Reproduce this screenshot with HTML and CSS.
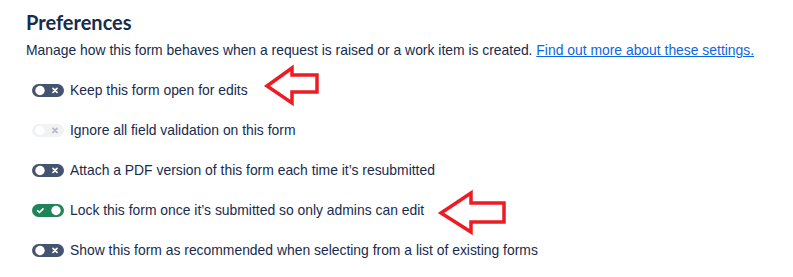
FILE: index.html
```html
<!DOCTYPE html>
<html>
<head>
<meta charset="utf-8">
<link rel="stylesheet" href="styles.css">
</head>
<body>
<div class="page">
  <h2 class="title">Preferences</h2>
  <p class="desc">Manage how this form behaves when a request is raised or a work item is created. <a href="#" class="link">Find out more about these settings.</a></p>
  <div class="list">
    <div class="row">
      <span class="toggle off"><svg viewBox="0 0 32 13" width="32" height="13"><circle cx="8" cy="6.5" r="4.7" fill="#fff"/><path d="M21 4.4 L25 8.4 M25 4.4 L21 8.4" stroke="#fff" stroke-width="1.7" stroke-linecap="round"/></svg></span>
      <span class="label">Keep this form open for edits</span>
    </div>
    <div class="row">
      <span class="toggle disabled"><svg viewBox="0 0 32 13" width="32" height="13"><circle cx="8" cy="6.5" r="4.7" fill="#fff"/><path d="M21 4.4 L25 8.4 M25 4.4 L21 8.4" stroke="#B3B9C4" stroke-width="1.7" stroke-linecap="round"/></svg></span>
      <span class="label">Ignore all field validation on this form</span>
    </div>
    <div class="row">
      <span class="toggle off"><svg viewBox="0 0 32 13" width="32" height="13"><circle cx="8" cy="6.5" r="4.7" fill="#fff"/><path d="M21 4.4 L25 8.4 M25 4.4 L21 8.4" stroke="#fff" stroke-width="1.7" stroke-linecap="round"/></svg></span>
      <span class="label">Attach a PDF version of this form each time it’s resubmitted</span>
    </div>
    <div class="row">
      <span class="toggle on"><svg viewBox="0 0 32 13" width="32" height="13"><path d="M5.6 6.7 L7.5 8.5 L11 4.9" fill="none" stroke="#fff" stroke-width="1.7" stroke-linecap="round" stroke-linejoin="round"/><circle cx="24" cy="6.5" r="4.7" fill="#fff"/></svg></span>
      <span class="label">Lock this form once it’s submitted so only admins can edit</span>
    </div>
    <div class="row">
      <span class="toggle off"><svg viewBox="0 0 32 13" width="32" height="13"><circle cx="8" cy="6.5" r="4.7" fill="#fff"/><path d="M21 4.4 L25 8.4 M25 4.4 L21 8.4" stroke="#fff" stroke-width="1.7" stroke-linecap="round"/></svg></span>
      <span class="label">Show this form as recommended when selecting from a list of existing forms</span>
    </div>
  </div>
  <svg class="arrows" width="793" height="277" viewBox="0 0 793 277">
    <polygon points="267,86 292,68 292,75 317,75 317,92 292,92 292,103" fill="none" stroke="#ED1C24" stroke-width="3.5" stroke-linejoin="miter"/>
    <polygon points="441,213 471,193 471,203 504,203 504,222 471,222 471,232" fill="none" stroke="#ED1C24" stroke-width="3.5" stroke-linejoin="miter"/>
  </svg>
</div>
</body>
</html>
```
FILE: styles.css
```css
html, body {
  margin: 0;
  padding: 0;
  background: #ffffff;
}
.page {
  position: relative;
  width: 793px;
  height: 277px;
  box-sizing: border-box;
  padding: 9px 0 0 26px;
  font-family: "Liberation Sans", Arial, sans-serif;
  color: #172B4D;
}
.title {
  margin: 0;
  font-family: Lato, "Liberation Sans", sans-serif;
  font-weight: 700;
  font-size: 20px;
  line-height: 26px;
  color: #172B4D;
}
.desc {
  margin: 6px 0 0 0;
  font-size: 13.9px;
  line-height: 18px;
  color: #172B4D;
}
.link {
  color: #0C66E4;
  text-decoration: underline;
}
.list {
  display: flex;
  flex-direction: column;
  gap: 20px;
  margin-top: 21px;
}
.row {
  display: flex;
  align-items: center;
  gap: 6px;
  height: 20px;
}
.toggle {
  display: block;
  width: 32px;
  height: 13px;
  border-radius: 7px;
  margin-left: 6px;
}
.toggle svg {
  display: block;
}
.toggle.off { background: #44546F; }
.toggle.on { background: #1F845A; }
.toggle.disabled { background: #F1F2F4; }
.label {
  font-size: 13.9px;
  line-height: 20px;
}
.arrows {
  position: absolute;
  left: 0;
  top: 0;
  pointer-events: none;
}
```
